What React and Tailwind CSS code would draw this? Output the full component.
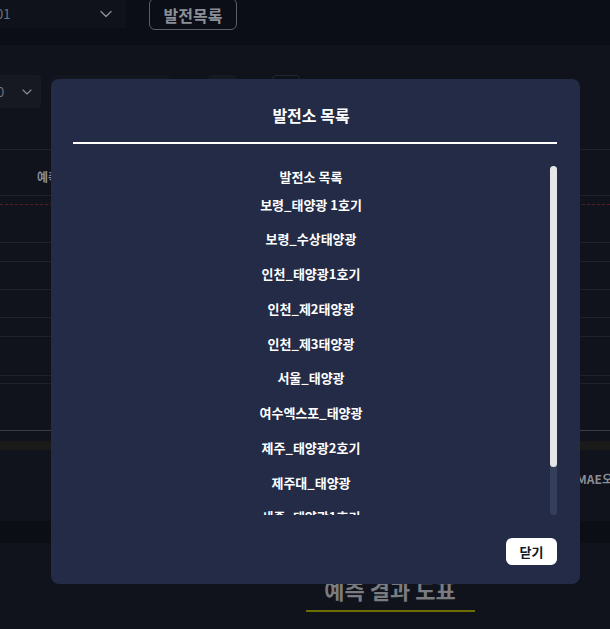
import { ChevronDown } from 'lucide-react'

const plants = [
  '보령_태양광 1호기',
  '보령_수상태양광',
  '인천_태양광1호기',
  '인천_제2태양광',
  '인천_제3태양광',
  '서울_태양광',
  '여수엑스포_태양광',
  '제주_태양광2호기',
  '제주대_태양광',
  '세종_태양광1호기',
  '세종_태양광2호기',
]

function PlantModal() {
  return (
    <div className="absolute left-[51px] top-[79px] flex h-[505px] w-[529px] flex-col rounded-lg bg-[#232b46] pl-[22px] pr-[23px] pt-[24px]">
      <h2 className="pr-2 text-center text-[16px] font-bold leading-[24px] text-white">발전소 목록</h2>
      <div className="mt-[15px] h-[2px] bg-white" />

      {/* list + scrollbar */}
      <div className="mt-[22px] flex h-[349px] gap-px">
        <div className="flex-1 overflow-hidden">
          <div className="flex h-[21px] items-center justify-center text-[13px] font-bold text-white">발전소 목록</div>
          {plants.map((name) => (
            <div key={name} className="flex h-[34.75px] items-center justify-center text-[13px] font-bold text-white">
              {name}
            </div>
          ))}
        </div>
        <div className="w-[7px] rounded-full bg-[#353e5b]">
          <div className="h-[301px] rounded-full bg-[#e6e6e6]" />
        </div>
      </div>

      <div className="mt-[23px] flex justify-end">
        <button className="h-[27px] w-[51px] rounded-md bg-white text-[13px] font-bold text-[#111827]">닫기</button>
      </div>
    </div>
  )
}

export default function App() {
  return (
    <div className="relative h-[629px] w-[610px] overflow-hidden bg-[#10131c] font-['Noto_Sans_CJK_KR','Noto_Sans',sans-serif]">
      {/* Top bar */}
      <div className="flex h-[45px] items-start bg-[#0b0e16]">
        <div className="flex h-[28px] w-[126px] items-center justify-between bg-[#0f121a] pr-[10px]">
          <span className="-ml-[4px] text-[13px] text-[#6b7280]">01</span>
          <ChevronDown className="h-5 w-5 text-[#8b8f97]" strokeWidth={1.6} />
        </div>
        <button className="ml-[23px] -mt-[2px] flex h-[32px] w-[88px] items-center justify-center rounded-md border border-[#5a5d63] pt-[2px] text-[16px] font-bold text-[#8b8f97]">
          발전목록
        </button>
      </div>

      {/* Filters */}
      <div className="flex h-[104px] items-start pt-[30px]">
        <div className="flex h-[33px] w-[41px] items-center justify-between rounded-r bg-[#161922] pr-[6px]">
          <span className="-ml-[3px] text-[13px] text-[#6b7280]">0</span>
          <ChevronDown className="h-4 w-4 text-[#8b8f97]" strokeWidth={1.6} />
        </div>
        <div className="ml-[10px] h-[33px] w-[120px] rounded bg-[#13161f]" />
        <div className="ml-[37px] h-[33px] w-[28px] rounded bg-[#161922]" />
        <div className="ml-[36px] h-[33px] w-[28px] rounded border border-[#22262f] bg-[#0f121a]" />
      </div>

      {/* Table */}
      <div className="flex h-[47px] items-center border-t border-b border-[#1e222b] pl-[37px]">
        <span className="pt-[8px] text-[12px] font-bold text-[#8a8d93]">예측 발전량 (kWh)</span>
      </div>
      <div className="h-[9px] border-b border-dashed border-[#5a1c24]" />
      <div className="h-[38px] border-b border-[#1e222b]" />
      <div className="h-[19px] border-b border-[#1e222b]" />
      <div className="h-[28px] border-b border-[#1e222b]" />
      <div className="h-[28px] border-b border-[#1e222b]" />
      <div className="h-[19px] border-b border-[#1e222b]" />
      <div className="h-[39px] border-b border-[#1e222b]" />
      <div className="h-[8px] border-b border-[#1e222b]" />
      <div className="h-[47px] border-b border-[#393d47]" />
      <div className="h-[10px]" />
      <div className="h-[9px] bg-[#1a1a19]" />
      <div className="flex h-[71px] items-start justify-end pt-[20px]">
        <span className="-mr-[14px] text-[12px] font-bold text-[#8a8d93]">MAE오차</span>
      </div>
      <div className="h-[22px] bg-[#0b0e15]" />

      {/* Chart tab */}
      <div className="flex justify-center pl-[170px] pt-[31px]">
        <div className="flex w-[169px] flex-col items-center border-b-2 border-[#6e6d00]">
          <span className="pb-[6px] text-[22px] font-bold leading-[30px] text-[#7a7c80]">예측 결과 도표</span>
        </div>
      </div>

      <PlantModal />
    </div>
  )
}
